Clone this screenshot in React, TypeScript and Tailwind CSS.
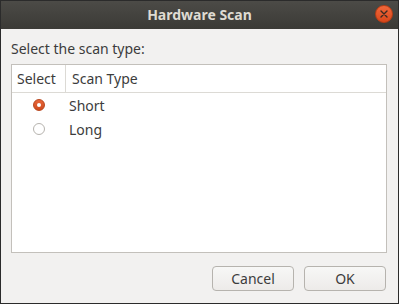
import React from "react";

export default function App() {
  const font = { fontFamily: '"Noto Sans", "DejaVu Sans", sans-serif' };
  return (
    <div className="w-[399px] h-[304px] border border-[#2b2b2b] bg-[#f2f1f0] flex flex-col overflow-hidden" style={font}>
      <div className="h-[28px] shrink-0 bg-gradient-to-b from-[#4c4b47] to-[#3b3a36] relative flex items-center justify-center">
        <span className="text-[14px] font-bold text-[#dfdbd2] leading-none">Hardware Scan</span>
        <div className="absolute right-[5px] top-[4px] w-[18px] h-[18px] rounded-full bg-gradient-to-b from-[#f0673a] to-[#d9471a] border border-[#b83c14] flex items-center justify-center">
          <svg width="8" height="8" viewBox="0 0 8 8">
            <path d="M1 1L7 7M7 1L1 7" stroke="#3a2a22" strokeWidth="1.4" strokeLinecap="round" />
          </svg>
        </div>
      </div>
      <div className="flex-1 flex flex-col pl-[10px] pr-[11px]">
        <div className="h-[35px] flex items-center text-[14px] text-[#3c3c3c] pt-[4px]">Select the scan type:</div>
        <div className="h-[189px] border border-[#c3c0bb] bg-white flex flex-col">
          <div className="h-[28px] flex border-b border-[#dcdad5] text-[14px] text-[#3c3c3c]">
            <div className="w-[54px] border-r border-[#dcdad5] flex items-center pl-[5px]">Select</div>
            <div className="flex items-center pl-[6px]">Scan Type</div>
          </div>
          <div className="flex flex-col text-[14px] text-[#3c3c3c]">
            <div className="h-[24px] flex items-center">
              <div className="w-[54px] flex justify-center">
                <div className="w-[12px] h-[12px] rounded-full bg-gradient-to-b from-[#e8663a] to-[#cf4a1c] border border-[#b8461d] flex items-center justify-center">
                  <div className="w-[4px] h-[4px] rounded-full bg-white" />
                </div>
              </div>
              <div className="pl-[3px]">Short</div>
            </div>
            <div className="h-[24px] flex items-center">
              <div className="w-[54px] flex justify-center">
                <div className="w-[12px] h-[12px] rounded-full bg-white border border-[#b6b3ae]" />
              </div>
              <div className="pl-[3px]">Long</div>
            </div>
          </div>
        </div>
        <div className="flex-1 flex justify-end items-center gap-[10px] pr-[1px]">
          <button className="w-[82px] h-[25px] rounded-[4px] border border-[#b6b3ae] bg-gradient-to-b from-[#f7f7f6] to-[#edebe9] text-[14px] text-[#3c3c3c]">Cancel</button>
          <button className="w-[82px] h-[25px] rounded-[4px] border border-[#b6b3ae] bg-gradient-to-b from-[#f7f7f6] to-[#edebe9] text-[14px] text-[#3c3c3c]">OK</button>
        </div>
      </div>
    </div>
  );
}
